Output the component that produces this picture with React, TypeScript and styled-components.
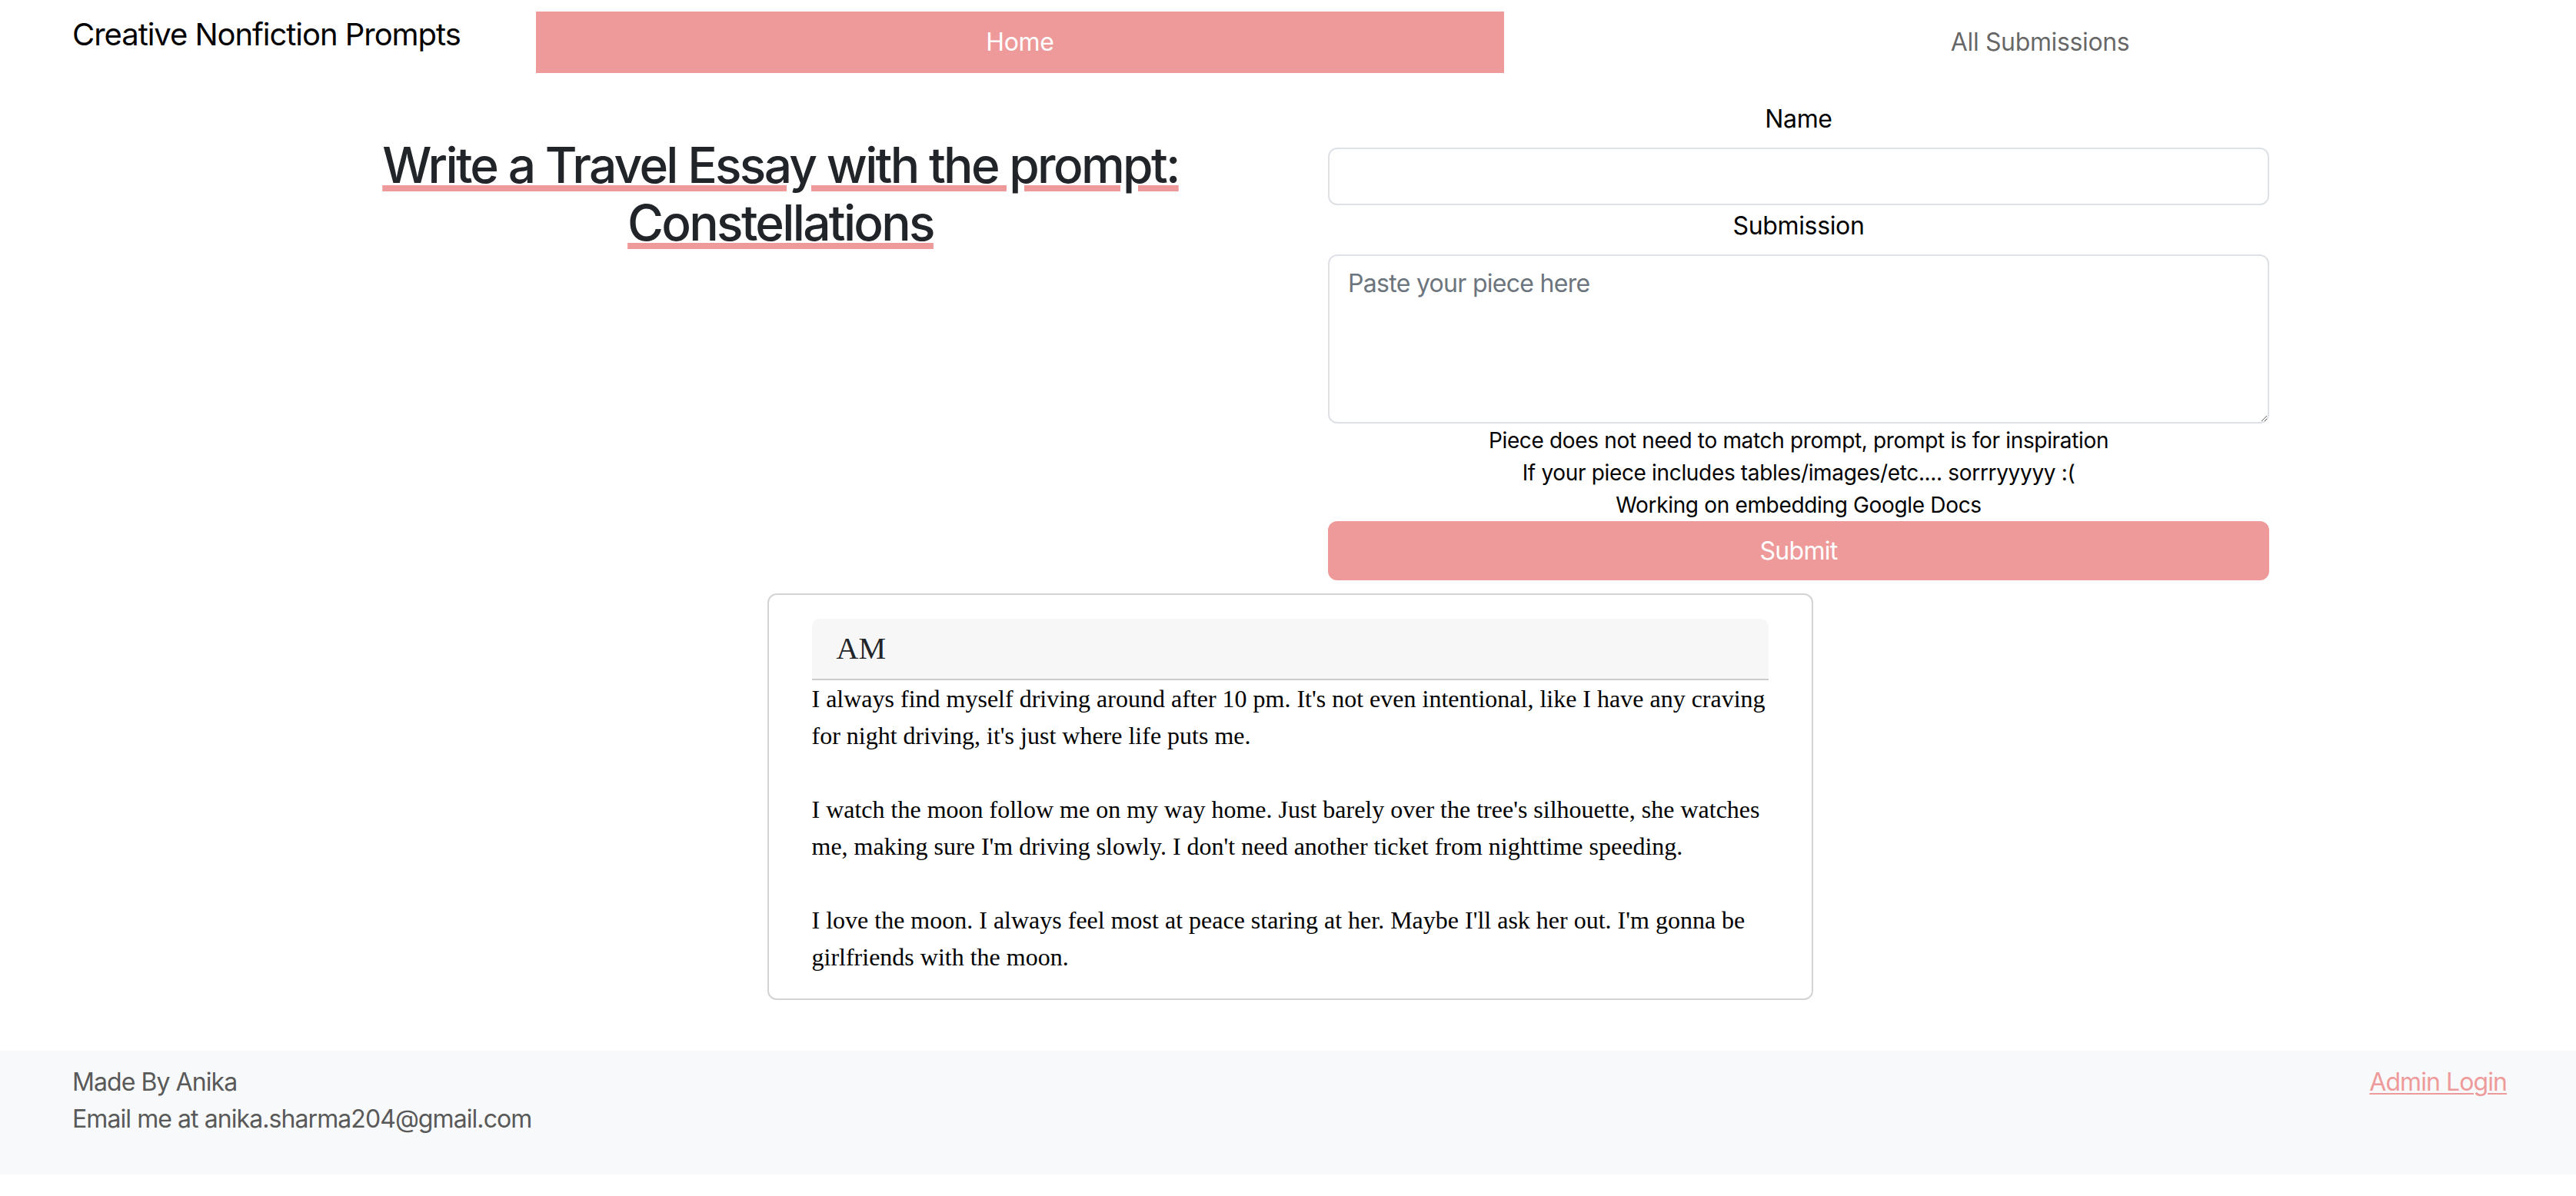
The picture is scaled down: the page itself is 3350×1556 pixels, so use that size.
import React from "react";
import styled, { createGlobalStyle } from "styled-components";

const PINK = "#ef9a9a";
const SANS = `Inter, "Noto Sans", "Liberation Sans", sans-serif`;

const GlobalStyle = createGlobalStyle`
  html, body { margin: 0; padding: 0; background: #ffffff; }
  body {
    font-family: ${SANS};
    letter-spacing: -0.022em;
    color: #212529;
    -webkit-font-smoothing: antialiased;
  }
  * { box-sizing: border-box; }
`;

const Page = styled.div`
  display: flex;
  flex-direction: column;
`;

const Navbar = styled.nav`
  display: flex;
  align-items: flex-start;
  padding: 15px 0 0 94px;
`;

const Brand = styled.a`
  font-size: 40px;
  line-height: 60px;
  letter-spacing: -0.026em;
  color: #000;
  text-decoration: none;
  margin-right: 98px;
  white-space: nowrap;
`;

const NavList = styled.ul`
  display: flex;
  flex: 1;
  list-style: none;
  margin: 0;
  padding: 0;
`;

const NavItem = styled.li<{ $active?: boolean }>`
  flex: 1 1 auto;
  text-align: center;
  padding: 16px ${(p) => (p.$active ? "21px" : "16px")};
  font-size: 32px;
  line-height: 48px;
  background: ${(p) => (p.$active ? PINK : "transparent")};
  color: ${(p) => (p.$active ? "#ffffff" : "rgba(0,0,0,0.62)")};
`;

const Container = styled.main`
  width: 2640px;
  margin: 33px auto 0;
  display: flex;
  flex-direction: column;
  align-items: center;
`;

const Row = styled.div`
  display: grid;
  grid-template-columns: 1fr 1fr;
  width: 100%;
`;

const Col = styled.div`
  padding: 0 24px;
  display: flex;
  flex-direction: column;
`;

const Heading = styled.h2`
  margin: 49px 0 0;
  text-align: center;
  font-size: 64px;
  line-height: 75px;
  font-weight: 500;
  letter-spacing: -0.042em;
  color: #212529;
`;

const Under = styled.span`
  text-decoration: underline;
  text-decoration-color: ${PINK};
  text-decoration-thickness: 8px;
  text-underline-offset: 3px;
  text-decoration-skip-ink: auto;
`;

const Form = styled.form`
  display: flex;
  flex-direction: column;
  margin: 0 20px 0 28px;
`;

const Label = styled.label`
  display: block;
  text-align: center;
  font-size: 32px;
  line-height: 48px;
  padding-top: 3px;
  color: #000;
  margin-bottom: 13px;
`;

const fieldBase = `
  width: 100%;
  border: 2px solid #dee2e6;
  border-radius: 12px;
  background: #fff;
  font-family: ${SANS};
  letter-spacing: -0.022em;
  font-size: 32px;
  line-height: 48px;
  color: #212529;
  outline: none;
  &::placeholder { color: #6c757d; }
`;

const Input = styled.input`
  ${fieldBase}
  height: 75px;
  padding: 12px 24px;
`;

const TextArea = styled.textarea`
  ${fieldBase}
  height: 220px;
  padding: 12px 24px;
  resize: vertical;
  display: block;
`;

const Notes = styled.div`
  margin-top: 1px;
  text-align: center;
  font-size: 28px;
  line-height: 42px;
  letter-spacing: -0.012em;
  color: #000;
`;

const SubmitButton = styled.button`
  width: 100%;
  height: 77px;
  border: none;
  border-radius: 12px;
  background: ${PINK};
  color: #fff;
  font-family: ${SANS};
  letter-spacing: -0.022em;
  font-size: 32px;
  line-height: 48px;
`;

const Card = styled.article`
  width: 1360px;
  margin: 17px 0 0 5px;
  border: 2px solid #d3d3d3;
  border-radius: 12px;
  padding: 31px 56px 30px;
  font-family: "Liberation Serif", "Times New Roman", serif;
  letter-spacing: 0;
  color: #000;
`;

const CardHeader = styled.div`
  background: #f7f7f7;
  border-bottom: 2px solid #cccccc;
  border-radius: 10px 10px 0 0;
  padding: 15px 32px;
  font-size: 40px;
  line-height: 48px;
  color: #212529;
`;

const CardText = styled.p`
  margin: 0;
  font-size: 32px;
  line-height: 48px;
  & + & { margin-top: 48px; }
`;

const Footer = styled.footer`
  margin-top: 66px;
  background: #f8f9fa;
  padding: 17px 90px 48px 94px;
  display: flex;
  justify-content: space-between;
  align-items: flex-start;
  font-size: 32px;
  line-height: 48px;
  letter-spacing: -0.029em;
  color: #595959;
`;

const FooterInfo = styled.div`
  display: flex;
  flex-direction: column;
`;

const AdminLink = styled.a`
  color: ${PINK};
  text-decoration: underline;
  text-decoration-thickness: 2px;
  text-underline-offset: 3px;
`;

const paragraphs = [
  "I always find myself driving around after 10 pm. It's not even intentional, like I have any craving for night driving, it's just where life puts me.",
  "I watch the moon follow me on my way home. Just barely over the tree's silhouette, she watches me, making sure I'm driving slowly. I don't need another ticket from nighttime speeding.",
  "I love the moon. I always feel most at peace staring at her. Maybe I'll ask her out. I'm gonna be girlfriends with the moon.",
];

export default function App() {
  return (
    <Page>
      <GlobalStyle />
      <Navbar>
        <Brand href="#">Creative Nonfiction Prompts</Brand>
        <NavList>
          <NavItem $active>Home</NavItem>
          <NavItem>All Submissions</NavItem>
        </NavList>
      </Navbar>
      <Container>
        <Row>
          <Col>
            <Heading>
              <Under>Write a Travel Essay with the prompt:</Under>
              <br />
              <Under>Constellations</Under>
            </Heading>
          </Col>
          <Col>
            <Form onSubmit={(e) => e.preventDefault()}>
              <Label htmlFor="name">Name</Label>
              <Input id="name" type="text" />
              <Label htmlFor="piece">Submission</Label>
              <TextArea id="piece" placeholder="Paste your piece here" />
              <Notes>
                Piece does not need to match prompt, prompt is for inspiration
                <br />
                If your piece includes tables/images/etc.... sorrryyyyy :(
                <br />
                Working on embedding Google Docs
              </Notes>
              <SubmitButton type="submit">Submit</SubmitButton>
            </Form>
          </Col>
        </Row>
        <Card>
          <CardHeader>AM</CardHeader>
          {paragraphs.map((t, i) => (
            <CardText key={i}>{t}</CardText>
          ))}
        </Card>
      </Container>
      <Footer>
        <FooterInfo>
          <span>Made By Anika</span>
          <span>Email me at anika.sharma204@gmail.com</span>
        </FooterInfo>
        <AdminLink href="#">Admin Login</AdminLink>
      </Footer>
    </Page>
  );
}
